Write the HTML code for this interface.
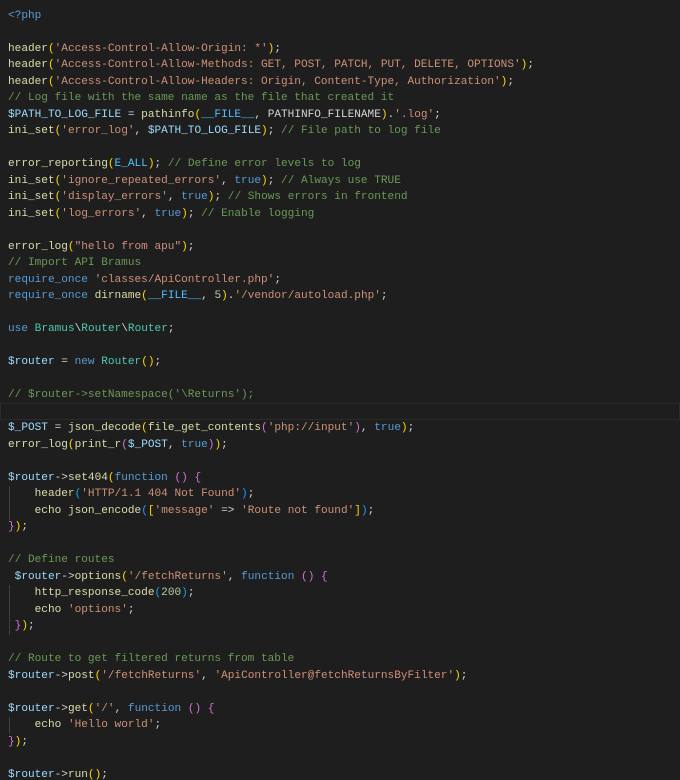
<!DOCTYPE html>
<html><head><meta charset="utf-8"><style>
html,body{margin:0;padding:0;background:#1e1e1e;width:680px;height:780px;overflow:hidden}
pre{margin:0;padding:7.75px 0 0 8px;font-family:"Liberation Mono",monospace;font-size:11.1px;line-height:16.5px;color:#d4d4d4;white-space:pre;position:relative}
.f{color:#dcdcaa}.s{color:#ce9178}.c{color:#6a9955}.v{color:#9cdcfe}.k{color:#569cd6}.n{color:#b5cea8}.t{color:#4ec9b0}.g{color:#4fc1ff}
.b1{color:#ffd700}.b2{color:#da70d6}.b3{color:#179fff}
.hl{position:absolute;left:0;right:0;top:403px;height:15px;border:1px solid #2c2c2c}
.ig{position:absolute;width:1px;background:#404040}
</style></head><body>
<div class="hl"></div>
<div class="ig" style="left:9px;top:486px;height:34px"></div>
<div class="ig" style="left:9px;top:585px;height:50px"></div>
<div class="ig" style="left:9px;top:717px;height:17px"></div>
<pre><span class="k">&lt;?php</span>

<span class="f">header</span><span class="b1">(</span><span class="s">'Access-Control-Allow-Origin: *'</span><span class="b1">)</span>;
<span class="f">header</span><span class="b1">(</span><span class="s">'Access-Control-Allow-Methods: GET, POST, PATCH, PUT, DELETE, OPTIONS'</span><span class="b1">)</span>;
<span class="f">header</span><span class="b1">(</span><span class="s">'Access-Control-Allow-Headers: Origin, Content-Type, Authorization'</span><span class="b1">)</span>;
<span class="c">// Log file with the same name as the file that created it</span>
<span class="v">$PATH_TO_LOG_FILE</span> = <span class="f">pathinfo</span><span class="b1">(</span><span class="g">__FILE__</span>, PATHINFO_FILENAME<span class="b1">)</span>.<span class="s">'.log'</span>;
<span class="f">ini_set</span><span class="b1">(</span><span class="s">'error_log'</span>, <span class="v">$PATH_TO_LOG_FILE</span><span class="b1">)</span>; <span class="c">// File path to log file</span>

<span class="f">error_reporting</span><span class="b1">(</span><span class="g">E_ALL</span><span class="b1">)</span>; <span class="c">// Define error levels to log</span>
<span class="f">ini_set</span><span class="b1">(</span><span class="s">'ignore_repeated_errors'</span>, <span class="k">true</span><span class="b1">)</span>; <span class="c">// Always use TRUE</span>
<span class="f">ini_set</span><span class="b1">(</span><span class="s">'display_errors'</span>, <span class="k">true</span><span class="b1">)</span>; <span class="c">// Shows errors in frontend</span>
<span class="f">ini_set</span><span class="b1">(</span><span class="s">'log_errors'</span>, <span class="k">true</span><span class="b1">)</span>; <span class="c">// Enable logging</span>

<span class="f">error_log</span><span class="b1">(</span><span class="s">"hello from apu"</span><span class="b1">)</span>;
<span class="c">// Import API Bramus</span>
<span class="k">require_once</span> <span class="s">'classes/ApiController.php'</span>;
<span class="k">require_once</span> <span class="f">dirname</span><span class="b1">(</span><span class="g">__FILE__</span>, <span class="n">5</span><span class="b1">)</span>.<span class="s">'/vendor/autoload.php'</span>;

<span class="k">use</span> <span class="t">Bramus</span>\<span class="t">Router</span>\<span class="t">Router</span>;

<span class="v">$router</span> = <span class="k">new</span> <span class="t">Router</span><span class="b1">()</span>;

<span class="c">// $router-&gt;setNamespace('\Returns');</span>

<span class="v">$_POST</span> = <span class="f">json_decode</span><span class="b1">(</span><span class="f">file_get_contents</span><span class="b2">(</span><span class="s">'php://input'</span><span class="b2">)</span>, <span class="k">true</span><span class="b1">)</span>;
<span class="f">error_log</span><span class="b1">(</span><span class="f">print_r</span><span class="b2">(</span><span class="v">$_POST</span>, <span class="k">true</span><span class="b2">)</span><span class="b1">)</span>;

<span class="v">$router</span>-&gt;<span class="f">set404</span><span class="b1">(</span><span class="k">function</span> <span class="b2">()</span> <span class="b2">{</span>
    <span class="f">header</span><span class="b3">(</span><span class="s">'HTTP/1.1 404 Not Found'</span><span class="b3">)</span>;
    <span class="f">echo</span> <span class="f">json_encode</span><span class="b3">(</span><span class="b1">[</span><span class="s">'message'</span> =&gt; <span class="s">'Route not found'</span><span class="b1">]</span><span class="b3">)</span>;
<span class="b2">}</span><span class="b1">)</span>;

<span class="c">// Define routes</span>
 <span class="v">$router</span>-&gt;<span class="f">options</span><span class="b1">(</span><span class="s">'/fetchReturns'</span>, <span class="k">function</span> <span class="b2">()</span> <span class="b2">{</span>
    <span class="f">http_response_code</span><span class="b3">(</span><span class="n">200</span><span class="b3">)</span>;
    <span class="f">echo</span> <span class="s">'options'</span>;
 <span class="b2">}</span><span class="b1">)</span>;

<span class="c">// Route to get filtered returns from table</span>
<span class="v">$router</span>-&gt;<span class="f">post</span><span class="b1">(</span><span class="s">'/fetchReturns'</span>, <span class="s">'ApiController@fetchReturnsByFilter'</span><span class="b1">)</span>;

<span class="v">$router</span>-&gt;<span class="f">get</span><span class="b1">(</span><span class="s">'/'</span>, <span class="k">function</span> <span class="b2">()</span> <span class="b2">{</span>
    <span class="f">echo</span> <span class="s">'Hello world'</span>;
<span class="b2">}</span><span class="b1">)</span>;

<span class="v">$router</span>-&gt;<span class="f">run</span><span class="b1">()</span>;
</pre>
</body></html>
